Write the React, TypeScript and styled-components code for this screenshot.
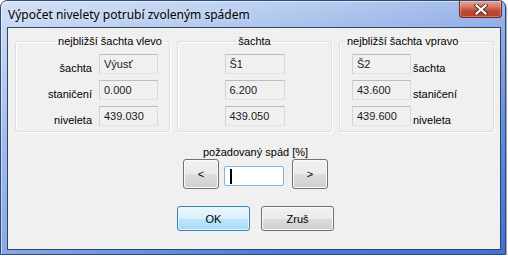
import React, { useState } from 'react';
import styled, { createGlobalStyle, css } from 'styled-components';

const Global = createGlobalStyle`
  body {
    margin: 0;
    background: #fff;
    font-family: "Liberation Sans", Arial, sans-serif;
    font-size: 11px;
  }
`

const Window = styled.div`
  width: 506px;
  height: 255px;
  box-sizing: border-box;
  border: 1px solid #2c4a7c;
  border-radius: 7px 7px 0 0;
  padding: 0 4px 4px 6px;
  display: flex;
  flex-direction: column;
  background:
    linear-gradient(to right, rgba(255,255,255,0.35), rgba(255,255,255,0) 55%, rgba(30,70,200,0.18)),
    linear-gradient(to bottom, #bdd1f0 0, #a9c3ed 28px, #6f97e3 140px, #477ad9 100%);
  box-shadow: 1px 1px 1px rgba(0,0,0,0.35), inset 1px 1px 0 rgba(255,255,255,0.5);
`

const TitleBar = styled.div`
  height: 26px;
  display: flex;
  justify-content: space-between;
  align-items: flex-start;
  padding-left: 1px;
`

const Title = styled.div`
  font-family: "Noto Sans", "Open Sans", sans-serif;
  font-size: 12px;
  color: #000;
  padding-top: 5px;
  text-shadow: 0 0 6px rgba(255,255,255,0.6);
`

const CloseButton = styled.div`
  width: 43px;
  height: 17px;
  margin-right: -1px;
  box-sizing: border-box;
  border: 1px solid #6f2a20;
  border-top: none;
  border-radius: 0 0 4px 4px;
  background: linear-gradient(to bottom, #e3a597 0%, #d27462 40%, #c24a36 60%, #b5402d 100%);
  box-shadow: inset 0 0 0 1px rgba(255,255,255,0.3);
  display: flex;
  align-items: center;
  justify-content: center;
`

const Client = styled.div`
  flex: 1;
  border: 1px solid #33445f;
  background: #f0f0f0;
  display: flex;
  flex-direction: column;
  padding-top: 6px;
`

const Groups = styled.div`
  display: grid;
  grid-template-columns: 155px 155px 155px;
  column-gap: 7px;
  margin-left: 7px;
`

const Group = styled.fieldset<{ $side: 'left' | 'center' | 'right' }>`
  margin: 0;
  min-width: 0;
  height: 98px;
  box-sizing: border-box;
  border: 1px solid #d5dfe5;
  border-radius: 3px;
  box-shadow: inset 1px 1px 0 #fff, 1px 1px 0 #fff;
  padding: 6px 0 5px 0;
  ${p => p.$side === 'left' && css`padding-right: 11px;`}
  ${p => p.$side === 'right' && css`padding-left: 12px;`}
`

const Legend = styled.legend<{ $side: 'left' | 'center' | 'right' }>`
  padding: 0 2px;
  line-height: 14px;
  color: #000;
  ${p => p.$side === 'left' && css`margin-left: auto; margin-right: -6px;`}
  ${p => p.$side === 'center' && css`margin: 0 auto;`}
  ${p => p.$side === 'right' && css`margin-left: -7px;`}
`

const Rows = styled.div<{ $cols: string; $gap: number }>`
  display: grid;
  grid-template-columns: ${p => p.$cols};
  grid-auto-rows: 20px;
  row-gap: 6px;
  column-gap: ${p => p.$gap}px;
  justify-content: ${p => (p.$cols.split(' ').length === 1 ? 'center' : 'stretch')};
`

const Label = styled.div<{ $right?: boolean }>`
  height: 20px;
  display: flex;
  align-items: flex-end;
  justify-content: ${p => (p.$right ? 'flex-end' : 'flex-start')};
  line-height: 12px;
  color: #000;
  white-space: nowrap;
`

const ReadBox = styled.div`
  box-sizing: border-box;
  height: 20px;
  border: 1px solid;
  border-color: #bdbdbd #dadada #e2e2e2 #d2d2d2;
  padding-left: 4px;
  line-height: 18px;
  color: #1a1a1a;
  background: #f0f0f0;
`

const Caption = styled.div`
  margin-top: 14px;
  line-height: 13px;
  text-align: center;
  padding-left: 3px;
`

const SlopeRow = styled.div`
  display: flex;
  justify-content: center;
  align-items: flex-end;
  padding-left: 3px;
`

const Button = styled.button<{ $primary?: boolean; $w: number; $h: number }>`
  width: ${p => p.$w}px;
  height: ${p => p.$h}px;
  box-sizing: border-box;
  padding: 0;
  font-family: "Liberation Sans", Arial, sans-serif;
  font-size: 11px;
  color: #000;
  border: 1px solid #707070;
  border-radius: 3px;
  background: linear-gradient(to bottom, #f2f2f2 0%, #ebebeb 50%, #dddddd 51%, #cfcfcf 100%);
  box-shadow: inset 0 0 0 1px #fbfbfb;
  ${p => p.$primary && css`
    border-color: #3c7fb1;
    background: linear-gradient(to bottom, #eaf6fd 0%, #d9f0fc 50%, #bee6fd 51%, #a7d9f5 100%);
    box-shadow: inset 0 0 0 1px #e4f5fd;
  `}
`

const SlopeInput = styled.div`
  width: 60px;
  height: 20px;
  box-sizing: border-box;
  margin: 0 8px 3px 5px;
  border: 1px solid #7eb4ea;
  border-radius: 2px;
  background: #fff;
  display: flex;
  align-items: center;
  padding-left: 5px;
`

const Caret = styled.span`
  width: 2px;
  height: 15px;
  background: #000;
`

const Actions = styled.div`
  display: flex;
  justify-content: center;
  gap: 11px;
  margin-top: 17px;
  padding-left: 3px;
`

type Row = { label: string; value: string }

const left: Row[] = [
  { label: 'šachta', value: 'Výusť' },
  { label: 'staničení', value: '0.000' },
  { label: 'niveleta', value: '439.030' },
]
const center = ['Š1', '6.200', '439.050']
const right: Row[] = [
  { label: 'šachta', value: 'Š2' },
  { label: 'staničení', value: '43.600' },
  { label: 'niveleta', value: '439.600' },
]

const CloseIcon = () => (
  <svg width="14" height="11" viewBox="0 0 14 11">
    <path d="M2.5 1.5 L11.5 9.5 M11.5 1.5 L2.5 9.5" stroke="#5a2a24" strokeWidth="4" strokeLinecap="square" />
    <path d="M2.5 1.5 L11.5 9.5 M11.5 1.5 L2.5 9.5" stroke="#fff" strokeWidth="2.2" strokeLinecap="square" />
  </svg>
)

export default function App() {
  const [slope] = useState('')

  return (
    <>
      <Global />
      <Window>
        <TitleBar>
          <Title>Výpočet nivelety potrubí zvoleným spádem</Title>
          <CloseButton><CloseIcon /></CloseButton>
        </TitleBar>
        <Client>
          <Groups>
            <Group $side="left">
              <Legend $side="left">nejbližší šachta vlevo</Legend>
              <Rows $cols="1fr 59px" $gap={7}>
                {left.map(r => (
                  <React.Fragment key={r.label}>
                    <Label $right>{r.label}</Label>
                    <ReadBox>{r.value}</ReadBox>
                  </React.Fragment>
                ))}
              </Rows>
            </Group>
            <Group $side="center">
              <Legend $side="center">šachta</Legend>
              <Rows $cols="60px" $gap={0}>
                {center.map(v => <ReadBox key={v}>{v}</ReadBox>)}
              </Rows>
            </Group>
            <Group $side="right">
              <Legend $side="right">nejbližší šachta vpravo</Legend>
              <Rows $cols="59px 1fr" $gap={2}>
                {right.map(r => (
                  <React.Fragment key={r.label}>
                    <ReadBox>{r.value}</ReadBox>
                    <Label>{r.label}</Label>
                  </React.Fragment>
                ))}
              </Rows>
            </Group>
          </Groups>
          <Caption>požadovaný spád [%]</Caption>
          <SlopeRow>
            <Button $w={36} $h={30}>&lt;</Button>
            <SlopeInput>{slope}<Caret /></SlopeInput>
            <Button $w={36} $h={30}>&gt;</Button>
          </SlopeRow>
          <Actions>
            <Button $primary $w={73} $h={25}>OK</Button>
            <Button $w={73} $h={25}>Zruš</Button>
          </Actions>
        </Client>
      </Window>
    </>
  )
}
